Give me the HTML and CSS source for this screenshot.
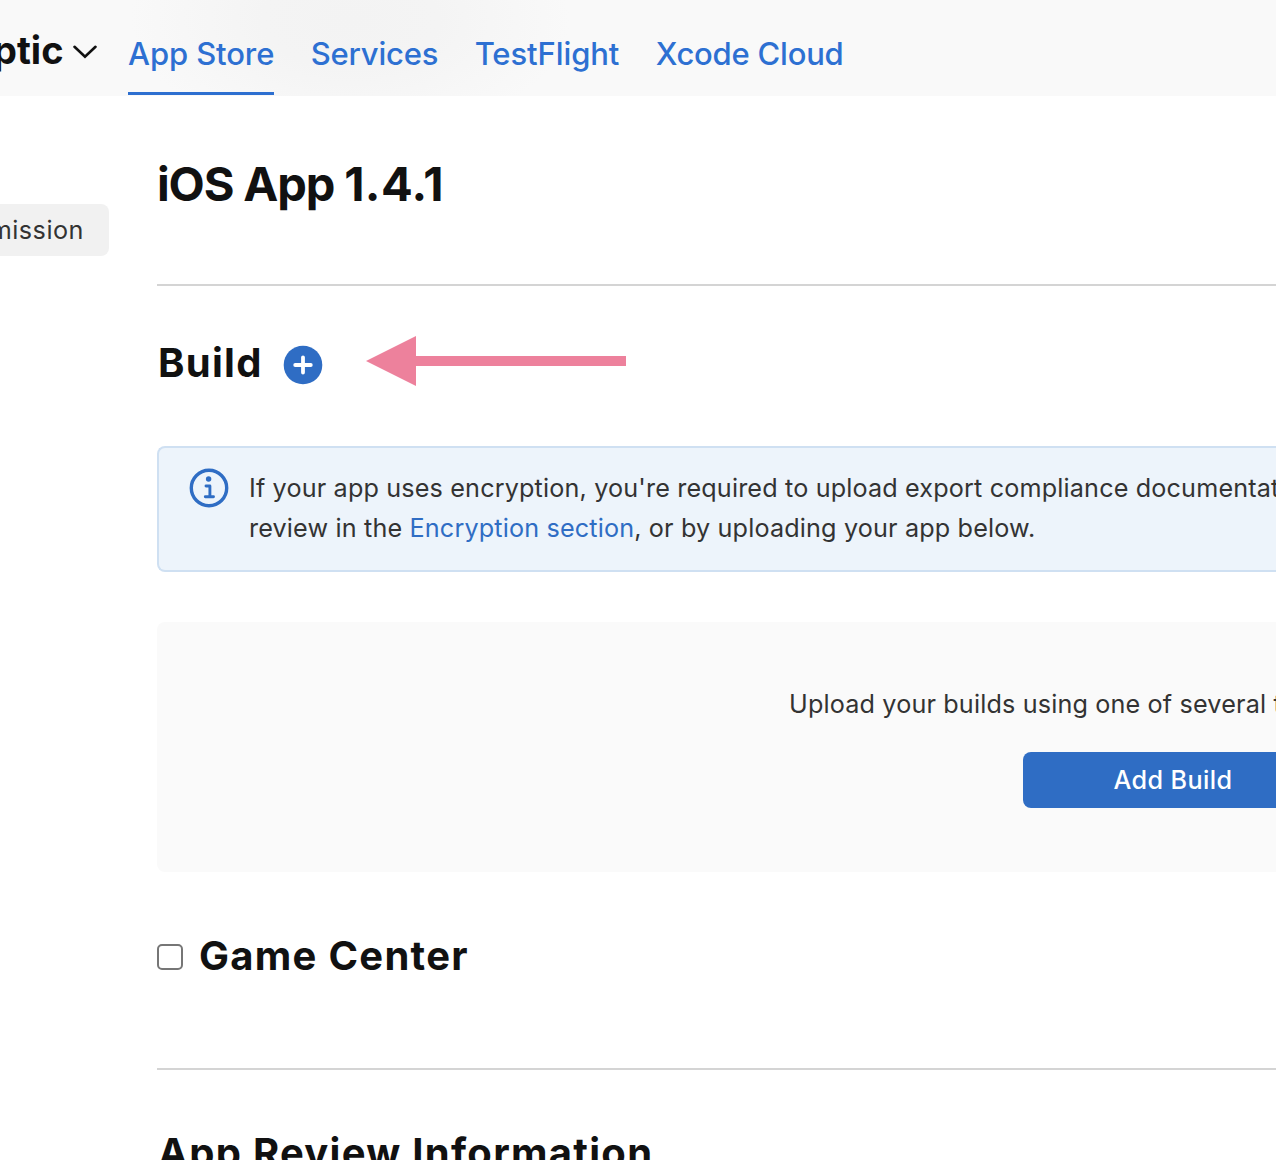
FILE: index.html
```html
<!DOCTYPE html>
<html lang="en">
<head>
<meta charset="utf-8">
<title>iOS App 1.4.1</title>
<link rel="stylesheet" href="styles.css">
</head>
<body>
<header class="topbar">
  <div class="app-switcher">
    <span class="app-name">ptic</span>
    <svg class="chevron" width="24" height="14" viewBox="0 0 24 14" fill="none"><path d="M1.5 1.8 12 11.8 22.5 1.8" stroke="#111" stroke-width="2.6" stroke-linecap="round" stroke-linejoin="miter"/></svg>
  </div>
  <nav class="tabs">
    <a class="tab tab-active">App Store</a>
    <a class="tab tab-tight">Services</a>
    <a class="tab">TestFlight</a>
    <a class="tab tab-tight">Xcode Cloud</a>
  </nav>
</header>
<div class="layout">
  <aside class="sidebar"><div class="side-item">mission</div></aside>
  <main class="content">
    <h1 class="page-title">iOS App <span class="version">1.4.1</span></h1>
    <section class="build">
      <div class="build-head">
        <h2 class="heading">Build</h2>
        <svg class="add-icon" width="40" height="40" viewBox="0 0 40 40"><circle cx="20" cy="20" r="19.3" fill="#2f6dc4"/><path d="M20 12.3V27.5M12.2 20H27.8" stroke="#fff" stroke-width="3.8" stroke-linecap="round"/></svg>
        <svg class="arrow" width="260" height="50" viewBox="0 0 260 50"><path d="M0 25 50 0V20H260V30H50V50Z" fill="#ed819c"/></svg>
      </div>
      <div class="notice">
        <svg class="info-icon" width="40" height="40" viewBox="0 0 40 40" fill="none"><circle cx="20" cy="20" r="17.7" stroke="#2f6dc4" stroke-width="3.4"/><circle cx="19.6" cy="11" r="2.7" fill="#2f6dc4"/><path d="M17 18H20.9V28.8M16.3 28.8H24.5" stroke="#2f6dc4" stroke-width="2.9" stroke-linecap="round" stroke-linejoin="round"/></svg>
        <p class="notice-text">If your app uses encryption, you're required to upload export compliance documentat<br>review in the <a class="link">Encryption section</a>, or by uploading your app below.</p>
      </div>
      <div class="empty">
        <p class="empty-text">Upload your builds using one of several t</p>
        <button class="button">Add Build</button>
      </div>
    </section>
    <section class="game-center">
      <span class="checkbox"></span>
      <h2 class="heading">Game Center</h2>
    </section>
    <section class="review"><h2 class="heading">App Review Information</h2></section>
  </main>
</div>
</body>
</html>
```
FILE: styles.css
```css
* { box-sizing: border-box; }
body { margin: 0; height: 1160px; overflow: hidden; background: #fff; color: #333; font-family: Inter, "Liberation Sans", sans-serif; font-size: 25.2px; letter-spacing: 0.15px; }
h1, h2, p { margin: 0; }
.topbar { display: flex; height: 96px; background: radial-gradient(ellipse 220px 120px at 350px 20px, #f3f3f3 0%, #f4f4f4 40%, #f9f9f9 100%) #f9f9f9; }
.app-switcher { display: flex; align-items: center; justify-content: flex-end; gap: 9px; width: 97px; height: 100px; flex: none; }
.app-name { font-size: 38px; font-weight: 700; color: #111; letter-spacing: 0; }
.chevron { flex: none; margin: 4px 0.5px 0 0; }
.tabs { display: flex; gap: 36.5px; margin-left: 31px; height: 95px; }
.tab { padding-top: 33px; line-height: 42px; font-size: 31px; font-weight: 500; letter-spacing: -0.1px; color: #2d70d2; white-space: nowrap; }
.tab-tight { letter-spacing: -0.22px; }
.tab-active { border-bottom: 3px solid #2d6fd0; }
.layout { display: flex; height: 1064px; overflow: hidden; }
.sidebar { width: 109px; flex: none; padding-top: 108px; }
.side-item { display: flex; justify-content: flex-end; align-items: center; height: 52px; padding-right: 25px; background: #f1f1f1; border-radius: 0 8px 8px 0; letter-spacing: 0.5px; font-weight: 420; }
.content { flex: 1; min-width: 0; margin-left: 48px; }
.page-title { height: 190px; padding-top: 59px; border-bottom: 2px solid #d4d4d4; font-size: 47px; line-height: 58px; font-weight: 700; letter-spacing: -1.15px; color: #111; }
.version { letter-spacing: 0.4px; }
.heading { font-size: 40px; line-height: 50px; font-weight: 700; letter-spacing: 1.28px; color: #111; white-space: nowrap; }
.build-head { display: flex; height: 160px; padding: 50px 0 0 1px; }
.build-head .heading { width: 105px; padding-top: 2px; }
.add-icon { margin: 9px 0 0 20px; }
.arrow { margin: 0 0 0 43px; }
.notice { display: flex; gap: 20px; height: 126px; padding: 20px 0 20px 30px; border: 2px solid #cfe0f2; border-right: 0; border-radius: 8px 0 0 8px; background: #edf4fb; overflow: hidden; }
.info-icon { flex: none; }
.notice-text { line-height: 40px; white-space: nowrap; }
.link { color: #2f6dc4; }
.empty { height: 250px; margin-top: 50px; padding-top: 62px; border-radius: 8px 0 0 8px; background: #fafafa; overflow: hidden; }
.empty-text { padding-left: 632px; line-height: 40px; white-space: nowrap; }
.button { display: block; width: 300px; height: 56px; margin: 28px 0 0 866px; border: 0; border-radius: 8px; background: #2f6dc4; color: #fff; font: 500 25.2px Inter, sans-serif; letter-spacing: 0.4px; }
.game-center { display: flex; gap: 16px; height: 198px; padding-top: 59px; border-bottom: 2px solid #d4d4d4; }
.checkbox { width: 26px; height: 26px; margin-top: 13px; border: 2px solid #767676; border-radius: 5px; }
.review { padding: 58px 0 0 1px; }
```
